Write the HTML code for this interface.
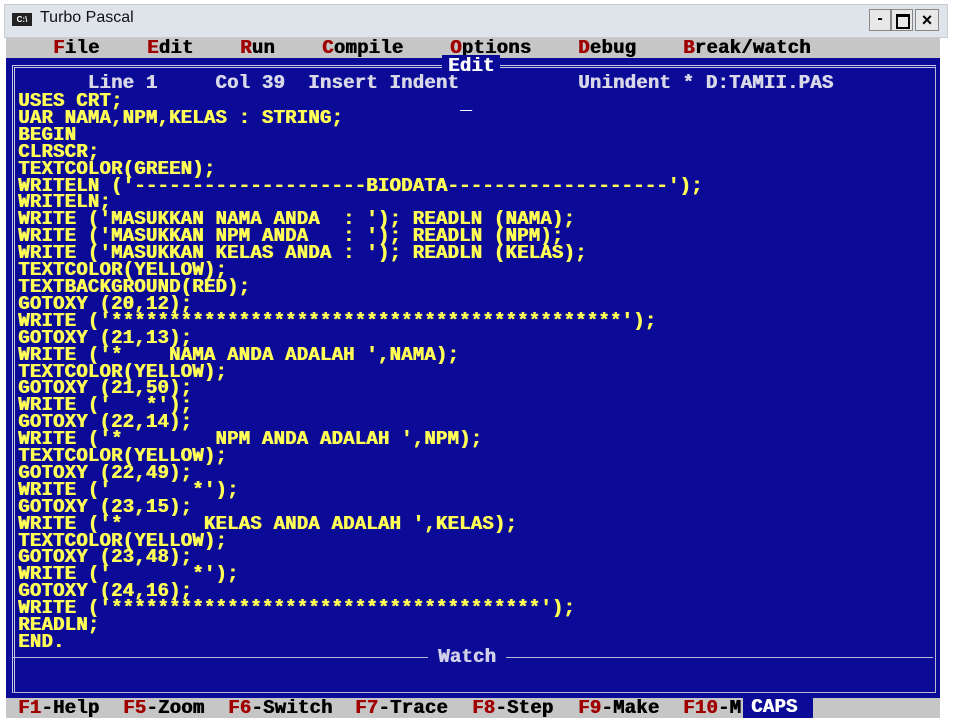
<!DOCTYPE html>
<html><head><meta charset="utf-8"><style>
body{margin:0;width:960px;height:720px;background:#fff;position:relative;overflow:hidden;font-family:"Liberation Mono",monospace;}
.abs{position:absolute;white-space:pre;}
.m{font-family:"Liberation Mono",monospace;font-weight:bold;font-size:19px;letter-spacing:0.2px;text-shadow:0.7px 0 0 currentColor;}
.r{color:#a00000}
</style></head><body>
<div class="abs" style="left:4px;top:4px;width:942px;height:32px;background:#dfe3ea;border:1px solid #c8ccd2"></div>
<div class="abs" style="left:12px;top:13px;width:20px;height:13px;background:#222;color:#fff;font:bold 8px 'Liberation Sans';line-height:13px;text-align:center">C:\</div>
<div class="abs" style="left:40px;top:9px;font:16px 'Liberation Sans',sans-serif;color:#111">Turbo Pascal</div>
<div class="abs" style="left:869px;top:9px;width:20px;height:20px;background:#e8e8e8;border:1px solid #888;font:bold 16px 'Liberation Sans';text-align:center;line-height:18px">-</div>
<div class="abs" style="left:891px;top:9px;width:20px;height:20px;background:#e8e8e8;border:1px solid #888"><div style="position:absolute;left:4px;top:4px;width:10px;height:10px;border:2px solid #000;border-top-width:3px"></div></div>
<div class="abs" style="left:915px;top:9px;width:22px;height:20px;background:#e8e8e8;border:1px solid #888;font:bold 18px 'Liberation Sans';text-align:center;line-height:20px">×</div>
<div class="abs" style="left:6px;top:38px;width:934px;height:20px;background:#c6c6c6"></div>
<div class="abs m" style="left:53px;top:37px"><span class="r">F</span>ile</div>
<div class="abs m" style="left:147px;top:37px"><span class="r">E</span>dit</div>
<div class="abs m" style="left:240px;top:37px"><span class="r">R</span>un</div>
<div class="abs m" style="left:322px;top:37px"><span class="r">C</span>ompile</div>
<div class="abs m" style="left:450px;top:37px"><span class="r">O</span>ptions</div>
<div class="abs m" style="left:578px;top:37px"><span class="r">D</span>ebug</div>
<div class="abs m" style="left:683px;top:37px"><span class="r">B</span>reak/watch</div>
<div class="abs" style="left:6px;top:58px;width:934px;height:640px;background:#0b0b98"></div>
<div class="abs" style="left:12px;top:65px;width:920px;height:624px;border:1px solid #b8b8d8;border-top:3px double #c8c8e0;border-left:3px double #c8c8e0"></div>
<div class="abs" style="left:13px;top:657px;width:920px;height:1px;background:#b8b8d8"></div>
<div class="abs m" style="left:442px;top:55px;background:#0b0b98;color:#fff;padding:0 6px">Edit</div>
<div class="abs m" style="left:428px;top:646px;background:#0b0b98;color:#d0d0e8;padding:0 10px">Watch</div>
<div class="abs m" style="left:18px;top:72px;color:#d8d8e8">      Line 1     Col 39  Insert Indent</div>
<div class="abs m" style="left:578px;top:72px;color:#d8d8e8">Unindent * D:TAMII.PAS</div>
<div class="abs m" style="left:460px;top:93px;color:#fff">_</div>
<div class="abs m" style="left:18px;top:93px;color:#ffff55;line-height:16.9px">USES CRT;
UAR NAMA,NPM,KELAS : STRING;
BEGIN
CLRSCR;
TEXTCOLOR(GREEN);
WRITELN ('--------------------BIODATA-------------------');
WRITELN;
WRITE ('MASUKKAN NAMA ANDA  : '); READLN (NAMA);
WRITE ('MASUKKAN NPM ANDA   : '); READLN (NPM);
WRITE ('MASUKKAN KELAS ANDA : '); READLN (KELAS);
TEXTCOLOR(YELLOW);
TEXTBACKGROUND(RED);
GOTOXY (20,12);
WRITE ('********************************************');
GOTOXY (21,13);
WRITE ('*    NAMA ANDA ADALAH ',NAMA);
TEXTCOLOR(YELLOW);
GOTOXY (21,50);
WRITE ('   *');
GOTOXY (22,14);
WRITE ('*        NPM ANDA ADALAH ',NPM);
TEXTCOLOR(YELLOW);
GOTOXY (22,49);
WRITE ('       *');
GOTOXY (23,15);
WRITE ('*       KELAS ANDA ADALAH ',KELAS);
TEXTCOLOR(YELLOW);
GOTOXY (23,48);
WRITE ('       *');
GOTOXY (24,16);
WRITE ('*************************************');
READLN;
END.</div>
<div class="abs" style="left:6px;top:698px;width:934px;height:20px;background:#c6c6c6"></div>
<div class="abs m" style="left:18px;top:697px"><span class="r">F1</span>-Help</div>
<div class="abs m" style="left:123px;top:697px"><span class="r">F5</span>-Zoom</div>
<div class="abs m" style="left:228px;top:697px"><span class="r">F6</span>-Switch</div>
<div class="abs m" style="left:355px;top:697px"><span class="r">F7</span>-Trace</div>
<div class="abs m" style="left:472px;top:697px"><span class="r">F8</span>-Step</div>
<div class="abs m" style="left:578px;top:697px"><span class="r">F9</span>-Make</div>
<div class="abs m" style="left:683px;top:697px"><span class="r">F10</span>-M</div>
<div class="abs m" style="left:743px;top:698px;width:70px;height:20px;background:#0b0b98;color:#fff;padding-left:8px;box-sizing:border-box;line-height:19px">CAPS</div>
</body></html>
